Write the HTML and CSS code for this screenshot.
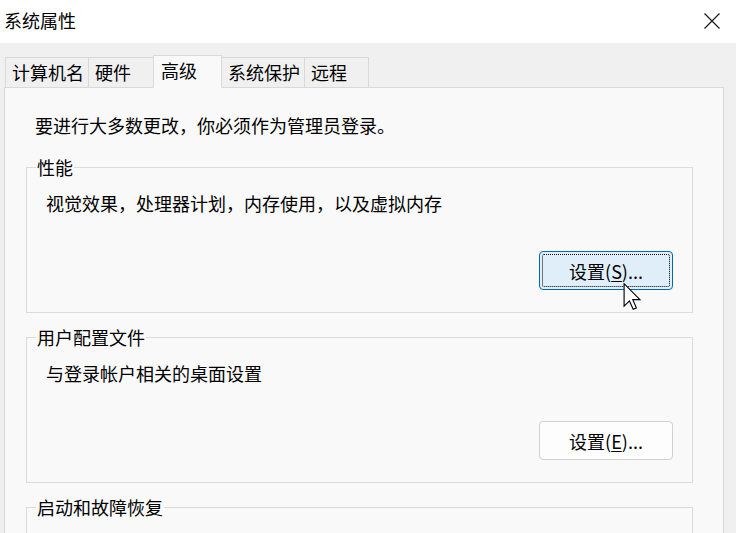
FILE: index.html
```html
<!DOCTYPE html>
<html lang="zh-CN">
<head>
<meta charset="utf-8">
<title>系统属性</title>
<link rel="stylesheet" href="styles.css">
</head>
<body>
<div class="window">
  <header class="titlebar">
    <span class="title">系统属性</span>
    <span class="close" aria-label="关闭">
      <svg width="16" height="16" viewBox="0 0 16 16"><path d="M0.5 0.5 L15.5 15.5 M15.5 0.5 L0.5 15.5" stroke="#1a1a1a" stroke-width="1.2" fill="none"/></svg>
    </span>
  </header>
  <div class="body">
    <nav class="tabs">
      <div class="tab">计算机名</div>
      <div class="tab">硬件</div>
      <div class="tab active">高级</div>
      <div class="tab">系统保护</div>
      <div class="tab last">远程</div>
    </nav>
    <section class="panel">
      <p class="intro">要进行大多数更改，你必须作为管理员登录。</p>
      <fieldset class="group">
        <legend>性能</legend>
        <p class="desc">视觉效果，处理器计划，内存使用，以及虚拟内存</p>
        <div class="actions">
          <button class="btn focused"><span class="focus-ring">设置(<u>S</u>)...</span></button>
        </div>
      </fieldset>
      <fieldset class="group">
        <legend>用户配置文件</legend>
        <p class="desc">与登录帐户相关的桌面设置</p>
        <div class="actions">
          <button class="btn">设置(<u>E</u>)...</button>
        </div>
      </fieldset>
      <fieldset class="group last-group">
        <legend>启动和故障恢复</legend>
      </fieldset>
    </section>
  </div>
  <svg class="cursor" width="19" height="28" viewBox="0 0 13 20">
    <path d="M0.5 0.5 L0.5 16.5 L4.3 12.8 L7 18.8 L9.3 17.8 L6.7 11.9 L11.8 11.9 Z" fill="#fff" stroke="#000" stroke-width="0.8" stroke-linejoin="miter"/>
  </svg>
</div>
</body>
</html>
```

FILE: styles.css
```css
* { box-sizing: border-box; }
html, body {
  margin: 0;
  padding: 0;
  width: 736px;
  height: 533px;
  overflow: hidden;
}
body {
  background: #f0f0f0;
  font-family: "Microsoft YaHei", "Noto Sans CJK SC", "Noto Sans", sans-serif;
  font-size: 18px;
  color: #000;
}
.window {
  position: relative;
  height: 533px;
}
.titlebar {
  height: 43px;
  background: #fff;
  display: flex;
  align-items: center;
  justify-content: space-between;
  padding: 0 16px 3px 4px;
}
.title {
  line-height: 24px;
}
.close {
  display: flex;
  width: 16px;
  height: 16px;
  margin-top: 2px;
}
.body {
  padding: 12px 12px 0 4px;
}
.tabs {
  display: flex;
  align-items: flex-end;
  padding-left: 1px;
  height: 33px;
  position: relative;
  z-index: 1;
  margin-bottom: -1px;
}
.tab {
  height: 31px;
  min-width: 65px;
  padding: 0 4px 0 6px;
  border: 1px solid #d9d9d9;
  border-right: none;
  line-height: 28px;
  background: #f0f0f0;
  white-space: nowrap;
}
.tab.last {
  border-right: 1px solid #d9d9d9;
}
.tab.active {
  height: 33px;
  min-width: 69px;
  padding-left: 7px;
  border-right: 1px solid #d9d9d9;
  border-bottom-color: #f9f9f9;
  background: #f9f9f9;
  line-height: 28px;
  position: relative;
  z-index: 2;
}
.tab.active + .tab {
  border-left: none;
}
.panel {
  background: #f9f9f9;
  border: 1px solid #d9d9d9;
  height: 460px;
  padding: 25px 30px 0 21px;
  display: flex;
  flex-direction: column;
  gap: 12px;
}
.intro {
  margin: 0 0 6px 9px;
  line-height: 24px;
}
.group {
  margin: 0;
  border: 1px solid #dcdcdc;
  padding: 0 19px 22px 9px;
  min-width: 0;
}
.group legend {
  padding: 0 1px;
  line-height: 24px;
}
.last-group {
  min-height: 60px;
}
.desc {
  margin: 12px 0 0 10px;
  line-height: 24px;
}
.actions {
  display: flex;
  justify-content: flex-end;
  margin-top: 36px;
}
.btn {
  width: 134px;
  height: 39px;
  border: 1px solid #d0d0d0;
  border-radius: 4px;
  background: #fdfdfd;
  font: inherit;
  color: #000;
  padding: 0;
  display: flex;
  align-items: center;
  justify-content: center;
}
.btn u {
  text-underline-offset: 2px;
}
.btn.focused {
  border: 1px solid #0067c0;
  background: #e0eef9;
  padding: 2px;
}
.focus-ring {
  display: flex;
  align-items: center;
  justify-content: center;
  width: 100%;
  height: 100%;
  border: 1px dotted #000;
  border-radius: 2px;
}
.cursor {
  position: absolute;
  left: 623px;
  top: 283px;
}
```
